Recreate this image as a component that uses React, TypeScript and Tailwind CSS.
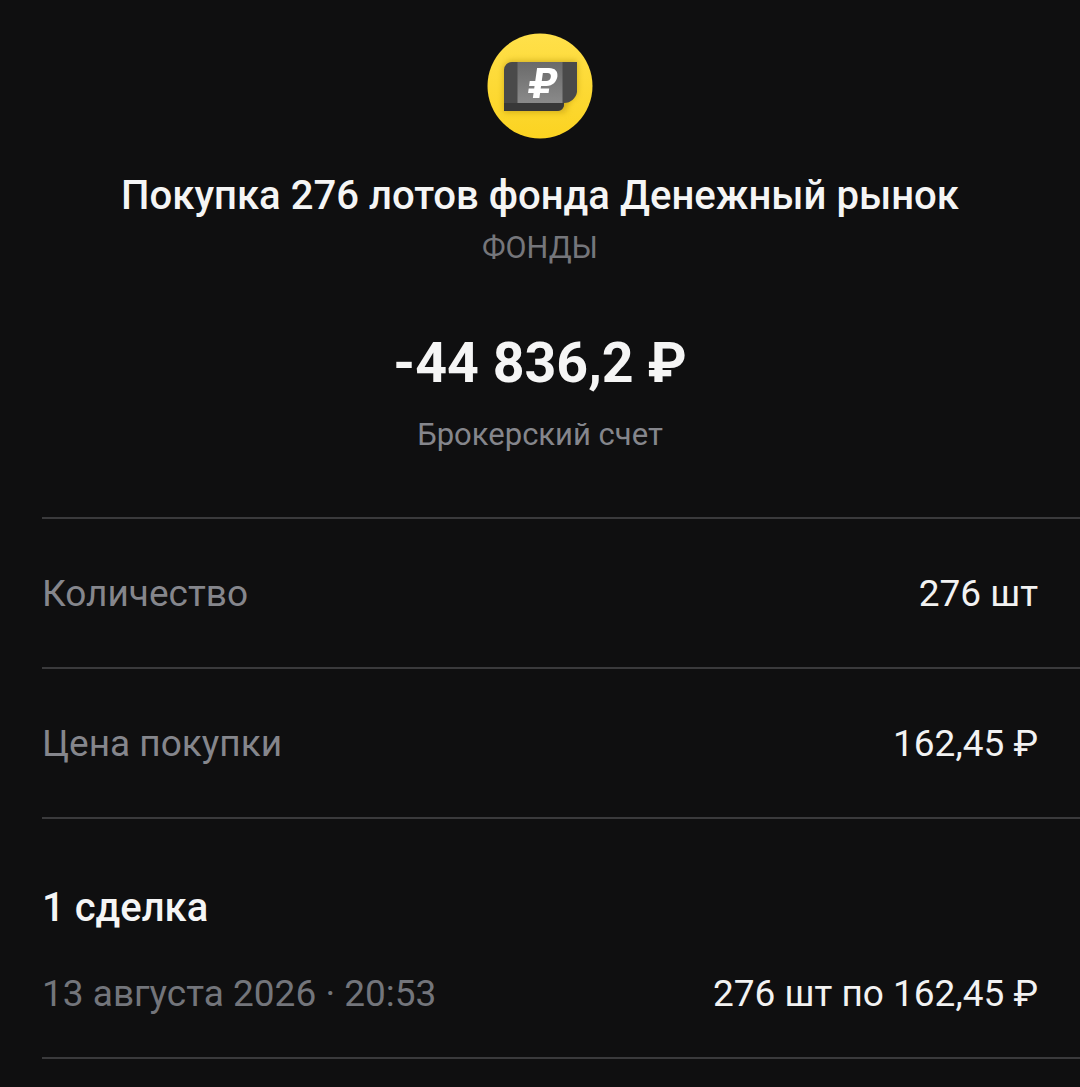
const Row = ({ label, value }: { label: string; value: string }) => (
  <div className="flex h-[150px] items-center justify-between border-t-2 border-[#3a3a3c] pr-[42px] pt-[2px]">
    <span className="text-[37px] text-[#85868c]">{label}</span>
    <span className="text-[37px] text-[#f2f2f2]">{value}</span>
  </div>
);

const Logo = () => (
  <svg width="106" height="106" viewBox="0 0 106 106" className="block">
    <defs>
      <linearGradient id="coin" x1="0" y1="0" x2="0" y2="1">
        <stop offset="0" stopColor="#ffe04a" />
        <stop offset="1" stopColor="#fbd321" />
      </linearGradient>
      <linearGradient id="panel" x1="0" y1="0" x2="0" y2="1">
        <stop offset="0" stopColor="#6a6a6a" />
        <stop offset="1" stopColor="#8a8a8a" />
      </linearGradient>
      <filter id="soft" x="-20%" y="-20%" width="140%" height="150%">
        <feGaussianBlur stdDeviation="3" />
      </filter>
    </defs>
    <circle cx="53" cy="53" r="52.5" fill="url(#coin)" />
    <path d="M17 36a8 8 0 0 1 8-8h65v32l-11 13v6H17z" fill="#a8860f" opacity="0.55" filter="url(#soft)" />
    <path d="M17 37a8 8 0 0 1 8-8h65v30c-1 6-6 11-13 11v2a6 6 0 0 1-6 6H17z" fill="#4a4a4a" />
    <path d="M17 70h60c0 4-2 8-8 8H17z" fill="#383838" />
    <rect x="30.500" y="29" width="45" height="41" fill="url(#panel)" />
    <g transform="translate(9 0) skewX(-8)" fill="#ffffff">
      <path d="M46 35h12c6 0 9.500 3.500 9.500 8.500S64 53 58 53h-5.500v2.500H61v4.500h-8.500v5H46v-5h-5.500v-4.500H46V53h-5.500v-5H46zm6.500 5v8H57c2.500 0 4-1.500 4-4s-1.500-4-4-4z" fillRule="evenodd" />
    </g>
  </svg>
);

export default function App() {
  return (
    <div className="h-[1087px] w-[1080px] overflow-hidden bg-[#0f0f10] font-['Roboto',sans-serif]">
      <div className="flex flex-col items-center pt-[33px]">
        <Logo />
        <h1 className="mt-[31px] text-[40.100px] leading-[52px] font-medium whitespace-nowrap text-[#f5f5f5]">
          Покупка 276 лотов фонда Денежный рынок
        </h1>
        <div className="mt-[8px] text-[30.500px] leading-[36px] text-[#75767b]">ФОНДЫ</div>
        <div className="mt-[63px] text-[55.500px] leading-[70px] font-bold text-[#f5f5f5]">-44 836,2 ₽</div>
        <div className="mt-[18px] text-[31px] leading-[36px] text-[#85868c]">Брокерский счет</div>
      </div>

      <div className="mt-[64px] ml-[42px]">
        <Row label="Количество" value="276 шт" />
        <Row label="Цена покупки" value="162,45 ₽" />
        <div className="h-[240px] border-t-2 border-[#3a3a3c] pr-[42px]">
          <div className="mt-[67px] text-[40px] leading-[44px] font-medium text-[#f5f5f5]">1 сделка</div>
          <div className="mt-[42px] flex items-center justify-between text-[37px] leading-[44px]">
            <span className="text-[#73757b]">13 августа 2026 · 20:53</span>
            <span className="text-[#f2f2f2]">276 шт по 162,45 ₽</span>
          </div>
        </div>
        <div className="border-t-2 border-[#3a3a3c]" />
      </div>
    </div>
  );
}
